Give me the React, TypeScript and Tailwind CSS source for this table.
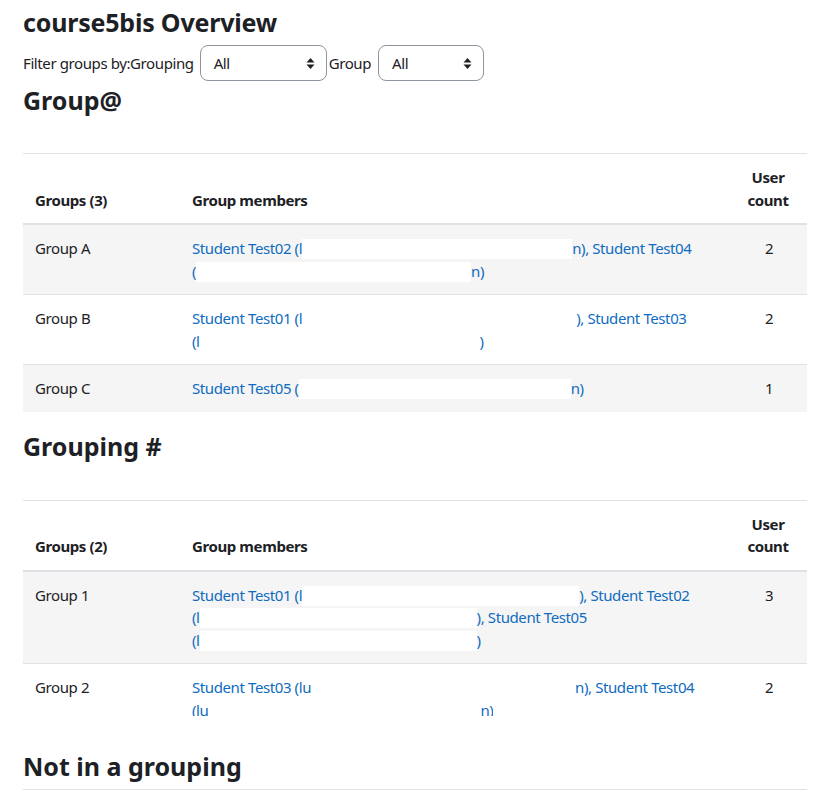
import React from 'react'

// Moodle-ish overview page: groups / groupings tables

const font = { fontFamily: '"Noto Sans", "Liberation Sans", sans-serif' }

function Redact({ w }: { w: number }) {
  // white box where the e-mail addresses were blanked out
  return <span className="inline-block h-[20px] bg-white align-top mt-[2px]" style={{ width: w }} />
}

function SortCaret() {
  return (
    <svg width="9" height="13" viewBox="0 0 9 13" className="shrink-0">
      <path d="M4.5 1 L8.5 5.5 L0.5 5.5 Z" fill="#1d2125" />
      <path d="M4.5 12 L8.5 7.5 L0.5 7.5 Z" fill="#1d2125" />
    </svg>
  )
}

function Select({ width }: { width: number }) {
  return (
    <div
      className="flex h-[36px] items-center justify-between rounded-[8px] border border-[#8f959e] bg-white pl-[13px] pr-[11px]"
      style={{ width }}
    >
      <span>All</span>
      <SortCaret />
    </div>
  )
}

type Row = { name: string; members: React.ReactNode; count: number }

function GroupTable({ title, rows }: { title: string; rows: Row[] }) {
  return (
    <table className="w-full border-collapse text-left">
      <thead>
        <tr className="border-t border-[#dee2e6]">
          <th className="w-[157px] border-b-2 border-[#dee2e6] p-[12px] align-bottom font-bold">{title}</th>
          <th className="border-b-2 border-[#dee2e6] p-[12px] align-bottom font-bold">Group members</th>
          <th className="w-[78px] border-b-2 border-[#dee2e6] p-[12px] text-center align-bottom font-bold">User count</th>
        </tr>
      </thead>
      <tbody>
        {rows.map((r, i) => (
          <tr key={r.name} className={`border-t border-[#dee2e6] ${i % 2 === 0 ? 'bg-[#f5f5f5]' : 'bg-white'}`}>
            <td className="p-[12px] align-top">{r.name}</td>
            <td className="p-[12px] align-top text-[#0f6cbf] whitespace-nowrap">{r.members}</td>
            <td className="p-[12px] pl-[14px] text-center align-top">{r.count}</td>
          </tr>
        ))}
      </tbody>
    </table>
  )
}

export default function App() {
  const groups: Row[] = [
    {
      name: 'Group A',
      members: (
        <>
          Student Test02 (l<Redact w={270} />n), Student Test04
          <br />
          (<Redact w={275} />n)
        </>
      ),
      count: 2,
    },
    {
      name: 'Group B',
      members: (
        <>
          Student Test01 (l<Redact w={274} />), Student Test03
          <br />
          (l<Redact w={280} />)
        </>
      ),
      count: 2,
    },
    {
      name: 'Group C',
      members: (
        <>
          Student Test05 (<Redact w={272} />n)
        </>
      ),
      count: 1,
    },
  ]

  const groupings: Row[] = [
    {
      name: 'Group 1',
      members: (
        <>
          Student Test01 (l<Redact w={277} />), Student Test02
          <br />
          (l<Redact w={277} />), Student Test05
          <br />
          (l<Redact w={277} />)
        </>
      ),
      count: 3,
    },
    {
      name: 'Group 2',
      members: (
        <>
          Student Test03 (lu<Redact w={264} />n), Student Test04
          <br />
          {/* second line got cut off in the original capture */}
          <span className="inline-block h-[17px] overflow-hidden align-top">
            (lu<Redact w={272} />n)
          </span>
        </>
      ),
      count: 2,
    },
  ]

  return (
    <div
      className="min-h-screen bg-white pl-[23px] pr-[21px] pt-[8px] text-[15px] leading-[1.5] tracking-[-0.4px] text-[#1d2125]"
      style={font}
    >
      <h2 className="mb-[9px] text-[25px] font-bold leading-[28px] tracking-[-0.2px]">course5bis Overview</h2>

      {/* Filter */}
      <div className="flex h-[36px] items-center">
        <span>Filter groups by:Grouping</span>
        <div className="ml-[6px]">
          <Select width={127} />
        </div>
        <span className="ml-[2px]">Group</span>
        <div className="ml-[7px]">
          <Select width={106} />
        </div>
      </div>

      <h3 className="mt-[5px] mb-[39px] text-[25px] font-bold leading-[28px] tracking-normal">Group@</h3>
      <GroupTable title="Groups (3)" rows={groups} />

      <h3 className="mt-[20px] mb-[40px] text-[25px] font-bold leading-[28px] tracking-normal">Grouping #</h3>
      <GroupTable title="Groups (2)" rows={groupings} />

      <h3 className="mt-[19px] text-[25px] font-bold leading-[28px] tracking-normal">Not in a grouping</h3>
      <div className="mt-[9px] border-t border-[#dee2e6]" />
    </div>
  )
}
